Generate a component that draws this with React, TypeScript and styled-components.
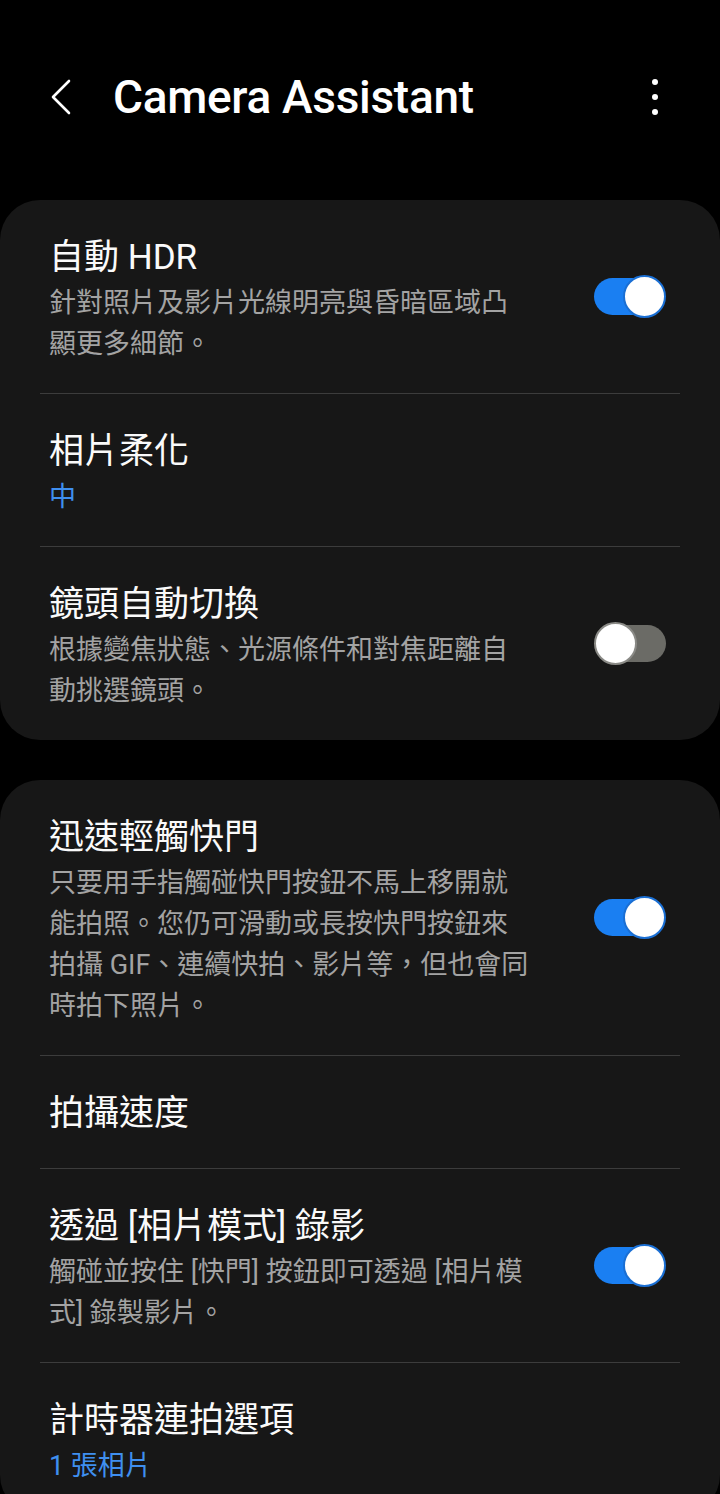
import React from "react";
import styled, { createGlobalStyle } from "styled-components";

const GlobalStyle = createGlobalStyle`
  html, body {
    margin: 0;
    padding: 0;
    background: #000;
  }
  body {
    font-family: Roboto, "Noto Sans CJK TC", "Noto Sans", sans-serif;
    color: #fff;
    -webkit-font-smoothing: antialiased;
  }
`;

interface ISetting {
  title: string;
  sub?: string;
  value?: string;
  on?: boolean;
  bottomPad?: number;
}

const groups: ISetting[][] = [
  [
    {
      title: "自動 HDR",
      sub: "針對照片及影片光線明亮與昏暗區域凸\n顯更多細節。",
      on: true
    },
    {
      title: "相片柔化",
      value: "中"
    },
    {
      title: "鏡頭自動切換",
      sub: "根據變焦狀態、光源條件和對焦距離自\n動挑選鏡頭。",
      on: false
    }
  ],
  [
    {
      title: "迅速輕觸快門",
      sub: "只要用手指觸碰快門按鈕不馬上移開就\n能拍照。您仍可滑動或長按快門按鈕來\n拍攝 GIF、連續快拍、影片等，但也會同\n時拍下照片。",
      on: true
    },
    {
      title: "拍攝速度",
      bottomPad: 32
    },
    {
      title: "透過 [相片模式] 錄影",
      sub: "觸碰並按住 [快門] 按鈕即可透過 [相片模\n式] 錄製影片。",
      on: true
    },
    {
      title: "計時器連拍選項",
      value: "1 張相片"
    }
  ]
];

const Page = styled.div`
  width: 720px;
  min-height: 1494px;
  background: #000;
  overflow: hidden;
`;

const Header = styled.div`
  display: flex;
  align-items: center;
  height: 56px;
  margin-top: 69px;
  padding-left: 50px;
  padding-right: 62px;
`;

const BackButton = styled.div`
  width: 63px;
  display: flex;
  align-items: center;
`;

const HeaderTitle = styled.h1`
  flex: 1;
  margin: 0;
  font-family: Roboto, "Liberation Sans", sans-serif;
  font-size: 46px;
  font-weight: 500;
  letter-spacing: -0.3px;
  color: #fff;
`;

const MoreButton = styled.div`
  display: flex;
  flex-direction: column;
  align-items: center;
  gap: 9px;
`;

const Dot = styled.span`
  width: 6px;
  height: 6px;
  border-radius: 50%;
  background: #fff;
`;

const Card = styled.section`
  background: #171717;
  border-radius: 40px;
  margin-top: 40px;

  &:first-of-type {
    margin-top: 75px;
  }
`;

const Row = styled.div<{ $bottomPad?: number }>`
  display: flex;
  align-items: center;
  padding: 36px 54px ${props => props.$bottomPad ?? 28}px 49px;
`;

const RowText = styled.div`
  flex: 1;
  min-width: 0;
`;

const Title = styled.div`
  font-size: 35px;
  line-height: 44px;
  color: #fafafa;
`;

const Sub = styled.div`
  margin-top: 3px;
  font-size: 27px;
  line-height: 41px;
  color: #a3a3a3;
  white-space: pre-line;
`;

const Value = styled.div`
  margin-top: 3px;
  font-size: 27px;
  line-height: 41px;
  color: #3f8fef;
`;

const Divider = styled.div`
  height: 1px;
  margin: 0 40px;
  background: #3c3c3c;
`;

const SwitchBox = styled.div`
  position: relative;
  width: 72px;
  height: 43px;
  margin-left: 30px;
  margin-bottom: 8px;
  flex-shrink: 0;
`;

const Track = styled.div<{ $on: boolean }>`
  position: absolute;
  top: 3px;
  bottom: 3px;
  left: ${props => (props.$on ? 0 : 8)}px;
  right: ${props => (props.$on ? 8 : 0)}px;
  border-radius: 19px;
  background: ${props => (props.$on ? "#1a7ff2" : "#6b6b66")};
`;

const Thumb = styled.div<{ $on: boolean }>`
  position: absolute;
  top: 0;
  left: ${props => (props.$on ? 29 : 0)}px;
  width: 39px;
  height: 39px;
  border-radius: 50%;
  background: #fff;
  border: 2px solid ${props => (props.$on ? "#1a6fd4" : "#8a8a86")};
`;

function Switch({ on }: { on: boolean }): React.ReactElement {
  return <SwitchBox>
    <Track $on={on} />
    <Thumb $on={on} />
  </SwitchBox>;
}

export default function App(): React.ReactElement {
  return <Page>
    <GlobalStyle />
    <Header>
      <BackButton>
        <svg width="22" height="36" viewBox="0 0 22 36">
          <polyline points="19,2 3,18 19,34" fill="none" stroke="#fff"
            strokeWidth="2.6" strokeLinecap="round" strokeLinejoin="round" />
        </svg>
      </BackButton>
      <HeaderTitle>Camera Assistant</HeaderTitle>
      <MoreButton>
        <Dot />
        <Dot />
        <Dot />
      </MoreButton>
    </Header>

    {groups.map((group, gi) => <Card key={gi}>
      {group.map((item, i) => <React.Fragment key={item.title}>
        {i > 0 ? <Divider /> : null}
        <Row $bottomPad={item.bottomPad}>
          <RowText>
            <Title>{item.title}</Title>
            {item.sub ? <Sub>{item.sub}</Sub> : null}
            {item.value ? <Value>{item.value}</Value> : null}
          </RowText>
          {item.on !== undefined ? <Switch on={item.on} /> : null}
        </Row>
      </React.Fragment>)}
    </Card>)}
  </Page>;
}
